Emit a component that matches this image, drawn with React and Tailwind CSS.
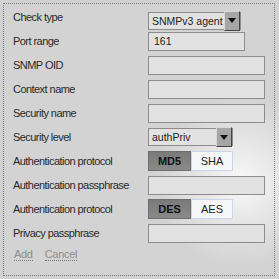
import { useState } from "react";

const Field = ({ w = "w-[117px]", value = "" }) => (
  <div
    className={`${w} h-[19px] border border-[#8c8c8c] bg-[#e2e2e2] px-[5px] text-[10.5px] leading-[17px] text-[#222]`}
  >
    {value}
  </div>
);

const Select = ({ w, value }) => (
  <div className={`${w} h-[18px] flex items-stretch border border-[#8c8c8c] bg-[#e2e2e2]`}>
    <span className="flex-1 min-w-0 overflow-hidden whitespace-nowrap pl-[3px] text-[10.5px] leading-[16px] text-[#222]">
      {value}
    </span>
    <span className="w-[16px] shrink-0 -my-[2px] flex items-center justify-center bg-[#a6a6a6] border border-t-[#d8d8d8] border-l-[#d8d8d8] border-r-[#444] border-b-[#444]">
      <svg width="8" height="5" viewBox="0 0 8 5">
        <path d="M0 0h8L4 5z" fill="#111" />
      </svg>
    </span>
  </div>
);

const Toggle = ({ options }) => {
  const [active, setActive] = useState(0);
  return (
    <div className="flex h-[20px] w-[85px] text-[11px]">
      {options.map((o, i) => (
        <button
          key={o}
          onClick={() => setActive(i)}
          className={
            i === active
              ? "w-[43px] bg-gradient-to-b from-[#7a7a7a] to-[#8a8a8a] font-bold text-[#111] border border-[#6e6e6e]"
              : "flex-1 bg-[#f6f7f9] text-[#222] border border-[#c9d6e3]"
          }
        >
          {o}
        </button>
      ))}
    </div>
  );
};

const Row = ({ label, children }) => (
  <div className="flex items-center h-6">
    <span className="w-[135px] whitespace-nowrap text-[11px] tracking-[-0.55px] text-[#2a2a2a]">{label}</span>
    {children}
  </div>
);

export default function App() {
  return (
    <div className="w-[279px] h-[279px] pt-[3px] pl-[3px] font-['Liberation_Sans',Arial,sans-serif] bg-[radial-gradient(circle_at_240px_182px,#f9f9f9_0px,#e6e6e6_40px,#d3d3d3_85px)]">
      <div className="w-[272px] h-[273px] border border-dotted border-[#777] pl-[9px] pt-px">
        <Row label="Check type">
          <div className="mt-[7px]">
            <Select w="w-[93px]" value="SNMPv3 agent" />
          </div>
        </Row>
        <Row label="Port range">
          <Field w="w-[97px]" value="161" />
        </Row>
        <Row label="SNMP OID">
          <Field />
        </Row>
        <Row label="Context name">
          <Field />
        </Row>
        <Row label="Security name">
          <Field />
        </Row>
        <Row label="Security level">
          <Select w="w-[85px]" value="authPriv" />
        </Row>
        <Row label="Authentication protocol">
          <Toggle options={["MD5", "SHA"]} />
        </Row>
        <Row label="Authentication passphrase">
          <Field />
        </Row>
        <Row label="Authentication protocol">
          <Toggle options={["DES", "AES"]} />
        </Row>
        <Row label="Privacy passphrase">
          <Field />
        </Row>
        <div className="flex gap-[12px] pl-px pt-[3px] text-[11px] tracking-[-0.3px] text-[#8e8e8e]">
          <span className="border-b border-dotted border-[#777] leading-[12px]">Add</span>
          <span className="border-b border-dotted border-[#777] leading-[12px]">Cancel</span>
        </div>
      </div>
    </div>
  );
}
